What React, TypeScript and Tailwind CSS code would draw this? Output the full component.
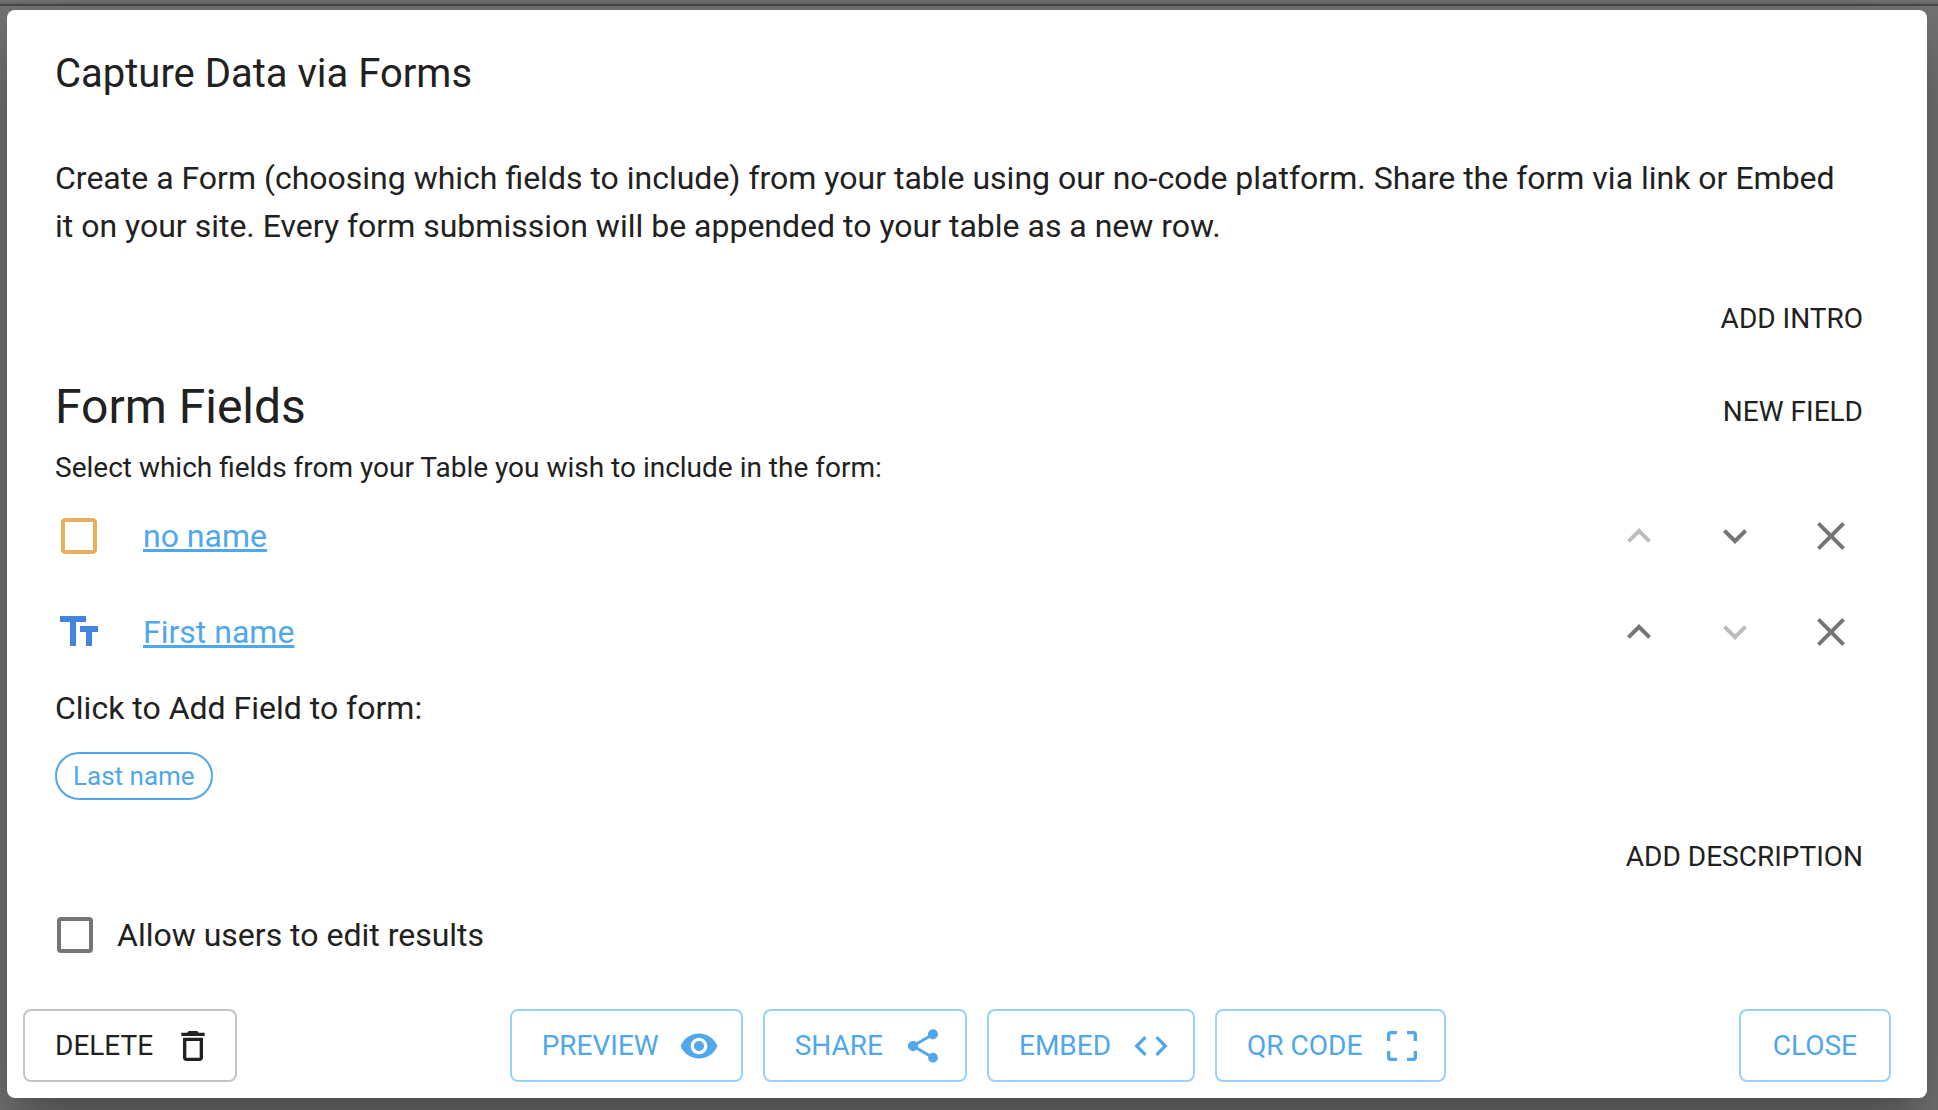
import { useState } from "react";
import type { ReactNode } from "react";
import {
  MdCheckBoxOutlineBlank,
  MdClose,
  MdCode,
  MdCropFree,
  MdDeleteOutline,
  MdExpandLess,
  MdExpandMore,
  MdShare,
  MdTextFields,
  MdVisibility,
} from "react-icons/md";

type Item = { name: string; icon: ReactNode };

const fields: Item[] = [
  { name: "no name", icon: <MdCheckBoxOutlineBlank className="size-12 text-[#e8b05c]" /> },
  { name: "First name", icon: <MdTextFields className="size-12 text-[#4285de]" /> },
];

const actions: Item[] = [
  { name: "Preview", icon: <MdVisibility className="size-10" /> },
  { name: "Share", icon: <MdShare className="size-10" /> },
  { name: "Embed", icon: <MdCode className="size-10" /> },
  { name: "QR Code", icon: <MdCropFree className="size-10" /> },
];

function TextButton({ children }: { children: ReactNode }) {
  return (
    <button type="button" className="rounded-lg px-4 py-3 text-[28px] leading-[49px] uppercase">
      {children}
    </button>
  );
}

function OutlinedButton({ children, icon, neutral }: { children: ReactNode; icon?: ReactNode; neutral?: boolean }) {
  const tone = neutral ? "border-[#c4c4c4]" : "border-[#9bd2f6] text-[#50a7ec]";
  const padding = icon ? "pl-[30px] pr-[22px]" : "px-8";
  return (
    <button
      type="button"
      className={`flex items-center gap-5 rounded-lg border-2 py-[10px] text-[28px] leading-[49px] whitespace-nowrap uppercase ${tone} ${padding}`}
    >
      {children}
      {icon}
    </button>
  );
}

function IconButton({ label, disabled, children }: { label: string; disabled?: boolean; children: ReactNode }) {
  return (
    <button
      type="button"
      aria-label={label}
      disabled={disabled}
      className="rounded-full p-6 text-[#757575] disabled:text-[#bdbdbd]"
    >
      {children}
    </button>
  );
}

export default function App() {
  const [editable, setEditable] = useState(false);

  return (
    <div className="min-h-screen bg-[#757575] font-['Roboto',sans-serif] text-[#212121]">
      <div className="h-1 border-b-2 border-[#6c6c6c]" />
      <div className="h-0.5 bg-[#4a4a4a]" />
      <main className="pt-1 pr-[11px] pb-3 pl-[7px]">
        <section
          role="dialog"
          aria-labelledby="dialog-title"
          className="rounded-lg bg-white shadow-[0_22px_30px_-14px_rgba(0,0,0,0.2),0_48px_76px_6px_rgba(0,0,0,0.14),0_18px_92px_16px_rgba(0,0,0,0.12)]"
        >
          <h2 id="dialog-title" className="px-12 py-8 text-[40px] leading-[64px]">
            Capture Data via Forms
          </h2>

          <div className="px-12 pt-4 pb-4">
            <p className="pr-5 text-[32px] leading-[48px]">
              Create a Form (choosing which fields to include) from your table using our no-code platform. Share the
              form via link or Embed it on your site. Every form submission will be appended to your table as a new row.
            </p>

            <div className="mt-8 flex justify-end">
              <TextButton>Add Intro</TextButton>
            </div>

            <div className="mt-5 flex items-start justify-between">
              <h3 className="text-[48px] leading-[64px]">Form Fields</h3>
              <TextButton>New Field</TextButton>
            </div>
            <p className="text-[28px] leading-[40px]">
              Select which fields from your Table you wish to include in the form:
            </p>

            <ul>
              {fields.map((field, i) => (
                <li key={field.name} className="flex items-center">
                  {field.icon}
                  <div className="ml-10 flex-1 text-[32px] leading-[48px]">
                    <a href="#" className="text-[#50a7ec] underline">
                      {field.name}
                    </a>
                  </div>
                  <IconButton label={`Move ${field.name} up`} disabled={i === 0}>
                    <MdExpandLess className="size-12" />
                  </IconButton>
                  <IconButton label={`Move ${field.name} down`} disabled={i === fields.length - 1}>
                    <MdExpandMore className="size-12" />
                  </IconButton>
                  <IconButton label={`Remove ${field.name}`}>
                    <MdClose className="size-12" />
                  </IconButton>
                </li>
              ))}
            </ul>

            <p className="mt-1 text-[32px] leading-[48px]">Click to Add Field to form:</p>
            <button
              type="button"
              className="mt-5 flex h-12 items-center rounded-full border-2 border-[#50a7ec] px-4 text-[26px] leading-[40px] text-[#50a7ec]"
            >
              Last name
            </button>

            <div className="mt-5 flex justify-end">
              <TextButton>Add Description</TextButton>
            </div>

            <label className="flex items-center gap-6 py-[18px] pl-0.5 text-[32px] leading-[48px]">
              <input
                type="checkbox"
                checked={editable}
                onChange={(e) => setEditable(e.target.checked)}
                className="size-9 appearance-none rounded-sm border-4 border-[#757575] checked:bg-[#757575]"
              />
              Allow users to edit results
            </label>
          </div>

          <footer className="flex items-center justify-between py-4 pr-9 pl-4">
            <OutlinedButton neutral icon={<MdDeleteOutline className="size-10" />}>
              Delete
            </OutlinedButton>
            <div className="flex gap-5 pr-5">
              {actions.map((action) => (
                <OutlinedButton key={action.name} icon={action.icon}>
                  {action.name}
                </OutlinedButton>
              ))}
            </div>
            <OutlinedButton>Close</OutlinedButton>
          </footer>
        </section>
      </main>
    </div>
  );
}
